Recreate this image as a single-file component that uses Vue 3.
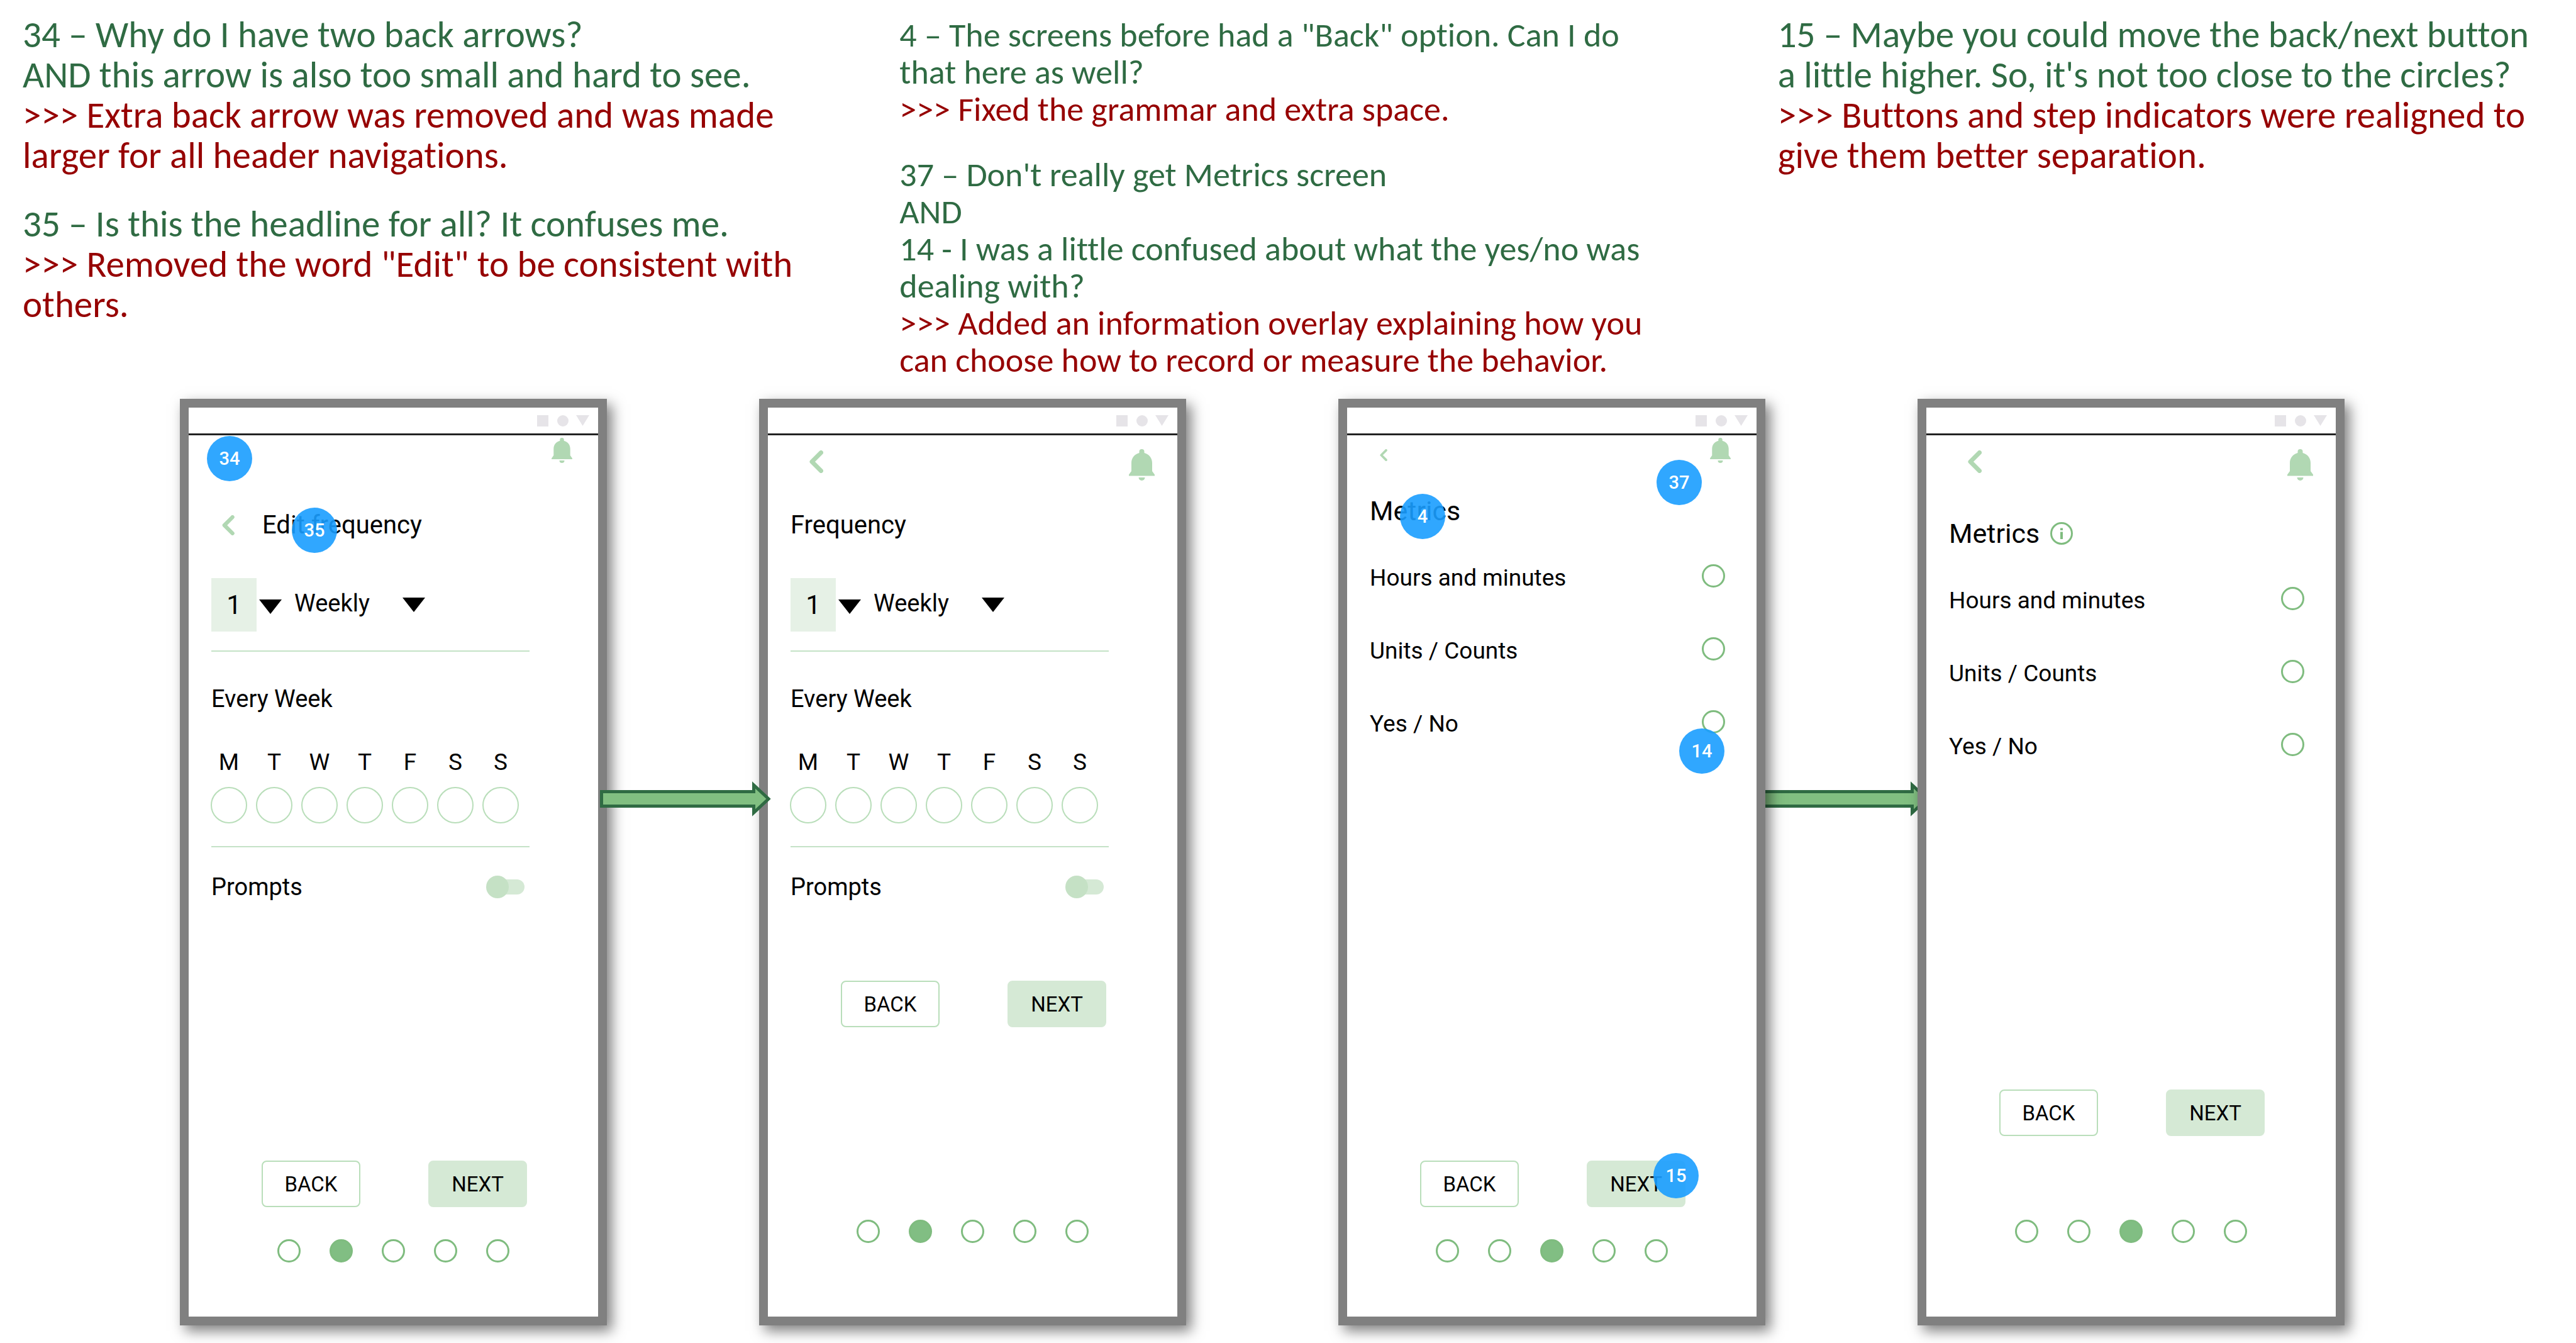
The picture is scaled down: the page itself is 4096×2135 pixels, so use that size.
<script setup>
const notes = [
  {
    size: 'large',
    groups: [
      [
        { tone: 'ask', lines: ['34 – Why do I have two back arrows?', 'AND this arrow is also too small and hard to see.'] },
        { tone: 'fix', lines: ['>>> Extra back arrow was removed and was made', 'larger for all header navigations.'] },
      ],
      [
        { tone: 'ask', lines: ['35 – Is this the headline for all? It confuses me.'] },
        { tone: 'fix', lines: ['>>> Removed the word "Edit" to be consistent with', 'others.'] },
      ],
    ],
  },
  {
    size: 'medium',
    groups: [
      [
        { tone: 'ask', lines: ['4 – The screens before had a "Back" option. Can I do', 'that here as well?'] },
        { tone: 'fix', lines: ['>>> Fixed the grammar and extra space.'] },
      ],
      [
        {
          tone: 'ask',
          lines: [
            "37 – Don't really get Metrics screen",
            'AND',
            '14 - I was a little confused about what the yes/no was',
            'dealing with?',
          ],
        },
        {
          tone: 'fix',
          lines: ['>>> Added an information overlay explaining how you', 'can choose how to record or measure the behavior.'],
        },
      ],
    ],
  },
  {
    size: 'large',
    groups: [
      [
        {
          tone: 'ask',
          lines: ['15 – Maybe you could move the back/next button', "a little higher. So, it's not too close to the circles?"],
        },
        {
          tone: 'fix',
          lines: ['>>> Buttons and step indicators were realigned to', 'give them better separation.'],
        },
      ],
    ],
  },
]

const phones = [
  {
    id: 'frequency-before', kind: 'frequency', title: 'Edit frequency', titleBack: true, topBack: false, small: true,
    footer: 'low', step: 2, arrow: 'front',
    pins: [{ n: 34, x: 65, y: 81 }, { n: 35, x: 200, y: 195 }],
  },
  {
    id: 'frequency-after', kind: 'frequency', title: 'Frequency', topBack: true,
    footer: 'high', step: 2, pins: [],
  },
  {
    id: 'metrics-before', kind: 'metrics', title: 'Metrics', topBack: true, small: true,
    footer: 'low', step: 3, arrow: 'behind',
    pins: [{ n: 37, x: 528, y: 119 }, { n: 4, x: 120, y: 173 }, { n: 14, x: 564, y: 546 }, { n: 15, x: 523, y: 1221 }],
  },
  {
    id: 'metrics-after', kind: 'metrics', title: 'Metrics', info: true, topBack: true,
    footer: 'middle', step: 3, pins: [],
  },
]

const days = ['M', 'T', 'W', 'T', 'F', 'S', 'S']
const options = ['Hours and minutes', 'Units / Counts', 'Yes / No']
</script>

<template>
  <main class="board">
    <section class="notes">
      <article v-for="(note, i) in notes" :key="i" class="note" :class="note.size">
        <div v-for="(group, g) in note.groups" :key="g" class="group">
          <p v-for="(part, p) in group" :key="p" :class="part.tone">
            <span v-for="line in part.lines" :key="line" class="line">{{ line }}</span>
          </p>
        </div>
      </article>
    </section>

    <section class="phones">
      <div v-for="phone in phones" :key="phone.id" class="slot">
        <svg v-if="phone.arrow" class="flow" :class="phone.arrow" viewBox="0 0 272 60" aria-hidden="true">
          <path d="M2.5 18.5H244.5V8L268 30L244.5 52V41.5H2.5Z" />
        </svg>

        <div class="phone" :class="[phone.kind, { small: phone.small, info: phone.info }]">
          <div class="status">
            <svg viewBox="0 0 83 18" aria-hidden="true">
              <path d="M0 0H18V18H0Z" />
              <circle cx="41" cy="9" r="9" />
              <path d="M62 0H83L72.5 17Z" />
            </svg>
          </div>

          <div class="topbar">
            <button v-if="phone.topBack" class="icon" aria-label="Go back">
              <svg class="chevron" viewBox="0 0 22 36"><path d="M18.5 3.5L4 18L18.5 32.5" /></svg>
            </button>
            <button class="icon alerts" aria-label="Notifications">
              <svg class="bell" viewBox="0 0 41 50">
                <path d="M20.5 0a4 4 0 0 1 4 4v2C32 8 37 14 37 22V35L41 40.5V42.5H0V40.5L4 35V22C4 14 9 8 16.5 6V4A4 4 0 0 1 20.5 0Z" />
                <path d="M15.5 45h10a5 5 0 0 1-10 0Z" />
              </svg>
            </button>
          </div>

          <div class="title">
            <button v-if="phone.titleBack" class="icon" aria-label="Back to edit">
              <svg class="chevron" viewBox="0 0 22 36"><path d="M18.5 3.5L4 18L18.5 32.5" /></svg>
            </button>
            <h2>{{ phone.title }}</h2>
            <button v-if="phone.info" class="icon" aria-label="About metrics">
              <svg class="about" viewBox="0 0 36 36">
                <circle cx="18" cy="18" r="16.5" />
                <path d="M16 9.5h4v3.5h-4zM16 15.5h4V27h-4z" />
              </svg>
            </button>
          </div>

          <template v-if="phone.kind === 'frequency'">
            <div class="pickers">
              <select class="count" aria-label="Count"><option>1</option></select>
              <svg class="caret" viewBox="0 0 36 29" aria-hidden="true"><path d="M0 6H36L18 29Z" /></svg>
              <select class="unit" aria-label="Unit"><option>Weekly</option></select>
              <svg class="caret" viewBox="0 0 36 23" aria-hidden="true"><path d="M0 0H36L18 23Z" /></svg>
            </div>
            <hr />
            <h3>Every Week</h3>
            <div class="days">
              <label v-for="(day, d) in days" :key="d">
                {{ day }}
                <input type="checkbox" />
              </label>
            </div>
            <hr />
            <label class="prompts">
              Prompts
              <input type="checkbox" role="switch" />
            </label>
          </template>

          <div v-else class="options">
            <label v-for="option in options" :key="option">
              {{ option }}
              <input type="radio" :name="phone.id" />
            </label>
          </div>

          <div class="footer" :class="phone.footer">
            <div class="buttons">
              <button class="back">BACK</button>
              <button class="next">NEXT</button>
            </div>
            <ol class="steps">
              <li v-for="n in 5" :key="n" :class="{ current: n === phone.step }"></li>
            </ol>
          </div>

          <span
            v-for="pin in phone.pins"
            :key="pin.n"
            class="pin"
            :style="{ left: pin.x + 'px', top: pin.y + 'px' }"
          >{{ pin.n }}</span>
        </div>
      </div>
    </section>
  </main>
</template>

<style>
body {
  margin: 0;
  background: #fff;
}
</style>

<style scoped>
.board {
  font-family: Roboto, sans-serif;
  color: #000;
  overflow: hidden;
}
.notes {
  display: grid;
  grid-template-columns: 1394fr 1396fr 1269fr;
  padding: 23px 0 0 36px;
  font-family: Carlito, Calibri, Lato, sans-serif;
  font-variant-ligatures: none;
}
.note {
  min-width: 0;
  white-space: nowrap;
}
.note.large {
  font-size: 59px;
  line-height: 64px;
}
.note.medium {
  padding-top: 4px;
  font-size: 54px;
  line-height: 59px;
}
.group + .group {
  margin-top: 45px;
}
.note p {
  margin: 0;
}
.line {
  display: block;
}
.ask {
  color: #2f6b43;
}
.fix {
  color: #960000;
}

.phones {
  display: grid;
  grid-template-columns: repeat(4, 1fr);
  gap: 242px;
  padding: 31px 368px 28px 286px;
  isolation: isolate;
}
.slot {
  position: relative;
  display: flex;
}
.phone {
  position: relative;
  flex: 1;
  display: flex;
  flex-direction: column;
  border: 14px solid #808080;
  background: #fff;
  box-shadow: 8px 9px 20px rgba(0, 0, 0, 0.5);
}
.flow {
  position: absolute;
  left: calc(100% - 11px);
  top: 606px;
  width: 272px;
  height: 60px;
  fill: #81bf81;
  stroke: #2f6b43;
  stroke-width: 5;
}
.flow.front {
  z-index: 1;
}
.flow.behind {
  z-index: -1;
}

.status {
  display: flex;
  align-items: center;
  justify-content: flex-end;
  height: 41px;
  padding-right: 14px;
  border-bottom: 3px solid #222;
}
.status svg {
  width: 83px;
  height: 18px;
  fill: #e6e4e8;
}

button {
  font-family: inherit;
  color: inherit;
}
.icon {
  display: flex;
  padding: 0;
  border: 0;
  background: none;
}
.chevron {
  width: 22px;
  height: 36px;
  fill: none;
  stroke: #b1d8b3;
  stroke-width: 7;
  stroke-linecap: round;
  stroke-linejoin: round;
}
.bell {
  width: 41px;
  height: 50px;
  fill: #b1d8b3;
}
.topbar {
  display: flex;
  align-items: flex-start;
  box-sizing: border-box;
  height: 80px;
  padding: 22px 36px 0 66px;
}
.topbar .chevron {
  margin-top: 2px;
}
.alerts {
  margin-left: auto;
}
.small .topbar {
  padding: 4px 41px 0 52px;
}
.small .topbar .chevron {
  width: 12px;
  height: 19px;
  margin-top: 18px;
}
.small .bell {
  width: 33px;
  height: 40px;
}

.title {
  display: flex;
  align-items: center;
  height: 60px;
  padding-left: 36px;
}
.frequency .title {
  margin-top: 33px;
}
.metrics .title {
  margin-top: 10px;
}
.metrics.info .title {
  margin-top: 46px;
}
.title .chevron {
  width: 20px;
  height: 32px;
  margin: 0 44px 0 17px;
}
h2,
h3 {
  margin: 0;
  font-weight: 400;
}
h2 {
  font-size: 40px;
  line-height: 60px;
}
.metrics h2 {
  font-size: 43px;
}
.about {
  width: 36px;
  height: 36px;
  margin-left: 17px;
  fill: #7fbc7f;
}
.about circle {
  fill: none;
  stroke: #7fbc7f;
  stroke-width: 3;
}

.pickers {
  display: flex;
  align-items: center;
  margin: 54px 0 0 36px;
}
select {
  appearance: none;
  padding: 0;
  border: 0;
  border-radius: 0;
  font-family: inherit;
  color: inherit;
}
.count {
  width: 72px;
  height: 85px;
  margin-right: 4px;
  background: #e6f1e6;
  font-size: 42px;
  text-align-last: center;
}
.unit {
  align-self: flex-start;
  width: 172px;
  height: 80px;
  margin-left: 20px;
  background: none;
  font-size: 38px;
}
.caret {
  width: 36px;
}
hr {
  width: 506px;
  height: 2px;
  margin: 30px 0 0 36px;
  border: 0;
  background: #c4e2c6;
}
.days,
.options {
  font-size: 37px;
  line-height: 48px;
}
h3,
.prompts {
  font-size: 38px;
  line-height: 48px;
}
h3 {
  margin: 51px 0 0 36px;
}
.days {
  display: flex;
  gap: 14px;
  margin: 53px 0 0 35px;
}
.days label {
  display: flex;
  flex-direction: column;
  align-items: center;
  gap: 15px;
  width: 58px;
}
.days + hr {
  margin-top: 36px;
}
input {
  appearance: none;
  box-sizing: border-box;
  margin: 0;
  border-radius: 50%;
}
.days input {
  width: 58px;
  height: 58px;
  border: 2px solid #b9deba;
}
.prompts {
  display: flex;
  align-items: center;
  justify-content: space-between;
  width: 498px;
  margin: 39px 0 0 36px;
}
.prompts input {
  position: relative;
  width: 61px;
  height: 36px;
  border-radius: 18px;
}
.prompts input::before,
.prompts input::after {
  content: '';
  position: absolute;
}
.prompts input::before {
  inset: 6px 0 6px 12px;
  border-radius: 12px;
  background: #d5e9d5;
}
.prompts input::after {
  inset: 0 25px 0 0;
  border-radius: 50%;
  background: #c5e1c5;
}

.options {
  display: flex;
  flex-direction: column;
  gap: 72px;
  margin: 55px 50px 0 36px;
}
.options label {
  display: flex;
  align-items: flex-start;
  justify-content: space-between;
  line-height: 44px;
}
.options input {
  width: 37px;
  height: 37px;
  border: 3px solid #7fbc7f;
}

.footer {
  display: flex;
  flex-direction: column;
  margin-top: auto;
}
.footer.low {
  gap: 51px;
  padding-bottom: 86px;
}
.footer.middle {
  gap: 133px;
  padding-bottom: 117px;
}
.footer.high {
  gap: 306px;
  padding-bottom: 117px;
}
.frequency .footer.low {
  padding-top: 411px;
}
.buttons {
  display: flex;
  gap: 108px;
  padding-left: 116px;
}
.buttons button {
  box-sizing: border-box;
  width: 157px;
  height: 74px;
  padding: 0;
  border: 2px solid #b9deba;
  border-radius: 8px;
  background: #fff;
  font-size: 33px;
}
.buttons .next {
  border-color: #d5e9d5;
  background: #d5e9d5;
}
.steps {
  display: flex;
  gap: 46px;
  margin: 0;
  padding: 0 0 0 141px;
  list-style: none;
}
.steps li {
  box-sizing: border-box;
  width: 37px;
  height: 37px;
  border: 3px solid #7fbc7f;
  border-radius: 50%;
}
.steps .current {
  background: #81be83;
}

.pin {
  position: absolute;
  width: 72px;
  height: 72px;
  margin: -36px 0 0 -36px;
  border-radius: 50%;
  background: rgba(25, 157, 255, 0.9);
  color: #fff;
  font-size: 29px;
  font-weight: 500;
  line-height: 72px;
  text-align: center;
}
</style>
